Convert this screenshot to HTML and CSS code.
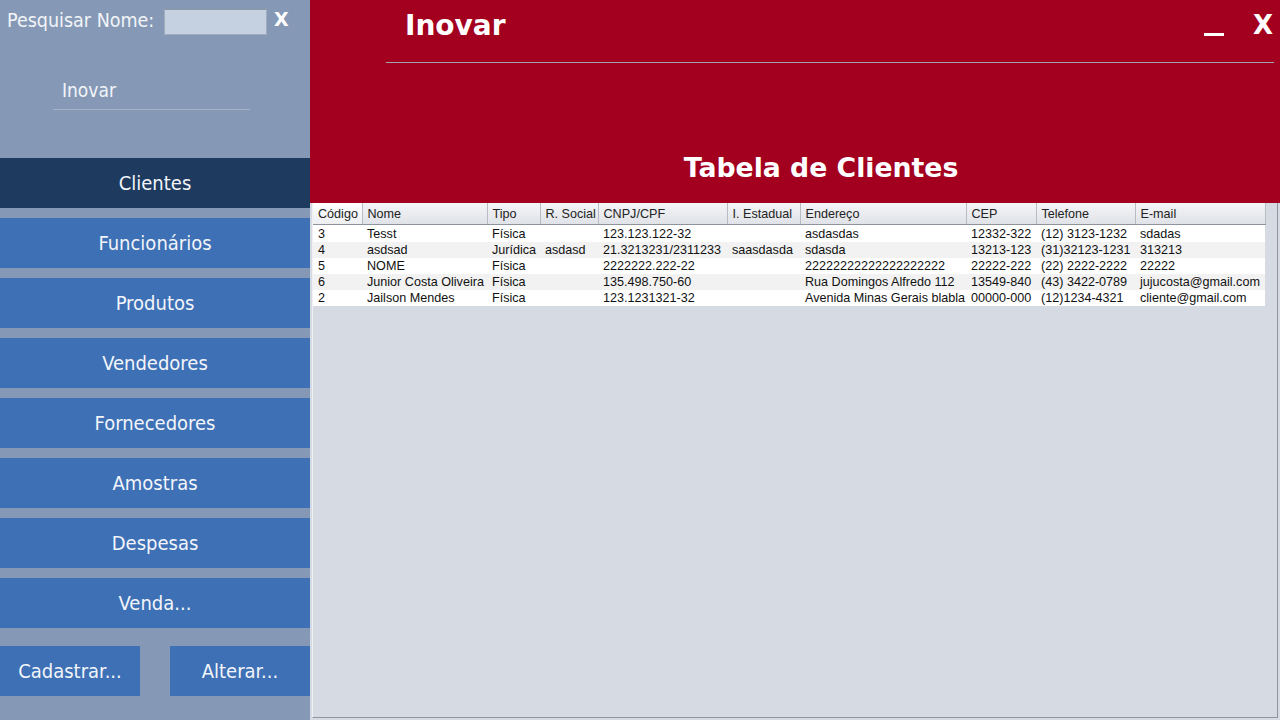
FILE: index.html
```html
<!DOCTYPE html>
<html lang="pt">
<head>
<meta charset="utf-8">
<title>Inovar - Tabela de Clientes</title>
<link rel="stylesheet" href="styles.css">
</head>
<body>
<div class="app">
  <aside class="sidebar">
    <div class="search">
      <label class="search-label" for="q">Pesquisar Nome:</label>
      <input id="q" class="search-input" type="text">
      <span class="search-clear">X</span>
    </div>
    <div class="brand"><span class="brand-text">Inovar</span></div>
    <nav class="menu">
      <div class="menu-item active">Clientes</div>
      <div class="menu-item">Funcionários</div>
      <div class="menu-item">Produtos</div>
      <div class="menu-item">Vendedores</div>
      <div class="menu-item">Fornecedores</div>
      <div class="menu-item">Amostras</div>
      <div class="menu-item">Despesas</div>
      <div class="menu-item">Venda...</div>
    </nav>
    <div class="actions">
      <div class="action">Cadastrar...</div>
      <div class="action">Alterar...</div>
    </div>
  </aside>
  <main class="main">
    <header class="top">
      <div class="titlebar">
        <span class="app-title">Inovar</span>
        <div class="window-ctrls">
          <span class="minimize"></span>
          <span class="close">X</span>
        </div>
      </div>
      <div class="rule"></div>
      <h1 class="page-title">Tabela de Clientes</h1>
    </header>
    <section class="pane">
      <table class="grid">
        <colgroup>
          <col class="c1"><col class="c2"><col class="c3"><col class="c4"><col class="c5">
          <col class="c6"><col class="c7"><col class="c8"><col class="c9"><col class="c10">
        </colgroup>
        <thead>
          <tr>
            <th>Código</th><th>Nome</th><th>Tipo</th><th>R. Social</th><th>CNPJ/CPF</th>
            <th>I. Estadual</th><th>Endereço</th><th>CEP</th><th>Telefone</th><th>E-mail</th>
          </tr>
        </thead>
        <tbody>
          <tr><td>3</td><td>Tesst</td><td>Física</td><td></td><td>123.123.122-32</td><td></td><td>asdasdas</td><td>12332-322</td><td>(12) 3123-1232</td><td>sdadas</td></tr>
          <tr><td>4</td><td>asdsad</td><td>Jurídica</td><td>asdasd</td><td>21.3213231/2311233</td><td>saasdasda</td><td>sdasda</td><td>13213-123</td><td>(31)32123-1231</td><td>313213</td></tr>
          <tr><td>5</td><td>NOME</td><td>Física</td><td></td><td>2222222.222-22</td><td></td><td>22222222222222222222</td><td>22222-222</td><td>(22) 2222-2222</td><td>22222</td></tr>
          <tr><td>6</td><td>Junior Costa Oliveira</td><td>Física</td><td></td><td>135.498.750-60</td><td></td><td>Rua Domingos Alfredo 112</td><td>13549-840</td><td>(43) 3422-0789</td><td>jujucosta@gmail.com</td></tr>
          <tr><td>2</td><td>Jailson Mendes</td><td>Física</td><td></td><td>123.1231321-32</td><td></td><td>Avenida Minas Gerais blabla</td><td>00000-000</td><td>(12)1234-4321</td><td>cliente@gmail.com</td></tr>
        </tbody>
      </table>
    </section>
  </main>
</div>
</body>
</html>
```

FILE: styles.css
```css
* { box-sizing: border-box; }
html, body { margin: 0; padding: 0; }
body {
  width: 1280px;
  height: 720px;
  overflow: hidden;
  font-family: "DejaVu Sans Condensed", "DejaVu Sans", sans-serif;
}
.app {
  display: flex;
  width: 1280px;
  height: 720px;
}

/* Sidebar */
.sidebar {
  width: 310px;
  flex: none;
  background: #8599b6;
  display: flex;
  flex-direction: column;
  color: #f2f4f8;
}
.search {
  display: flex;
  align-items: center;
  height: 44px;
  padding: 0 0 0 7px;
}
.search-label {
  font-size: 19.5px;
  width: 157px;
  white-space: nowrap;
  margin-top: -4px;
}
.search-input {
  width: 103px;
  height: 26px;
  margin: 0;
  padding: 0;
  background: #c5d1e0;
  border: 1px solid #a3acba;
  border-top-color: #8e97a4;
  outline: none;
}
.search-clear {
  margin-left: 7px;
  font-family: "DejaVu Sans", sans-serif;
  font-weight: bold;
  font-size: 19px;
  color: #ffffff;
  margin-top: -6px;
}
.brand {
  height: 114px;
  padding: 35px 0 0 53px;
}
.brand-text {
  display: block;
  width: 197px;
  height: 31px;
  padding-left: 9px;
  font-size: 19px;
  border-bottom: 1px solid #a6b2c6;
}
.menu {
  display: flex;
  flex-direction: column;
  gap: 10px;
}
.menu-item {
  height: 50px;
  background: #3e70b5;
  display: flex;
  align-items: center;
  justify-content: center;
  font-size: 20px;
  color: #f2f5fa;
}
.menu-item.active {
  background: #1f3a5f;
}
.actions {
  display: flex;
  justify-content: space-between;
  margin-top: 18px;
}
.action {
  width: 140px;
  height: 50px;
  background: #3e70b5;
  display: flex;
  align-items: center;
  justify-content: center;
  font-size: 20px;
  color: #f2f5fa;
}

/* Main */
.main {
  flex: 1;
  display: flex;
  flex-direction: column;
  background: #d6dae2;
}
.top {
  height: 203px;
  flex: none;
  background: #a30020;
  color: #ffffff;
}
.titlebar {
  display: flex;
  align-items: center;
  justify-content: space-between;
  height: 50px;
  padding: 0 7px 0 95px;
}
.app-title {
  font-family: "DejaVu Sans", sans-serif;
  font-weight: bold;
  font-size: 28px;
}
.window-ctrls {
  display: flex;
  align-items: center;
}
.minimize {
  display: block;
  width: 20px;
  height: 3px;
  background: #ffffff;
  margin-top: 18px;
  margin-right: 29px;
}
.close {
  font-family: "DejaVu Sans", sans-serif;
  font-weight: bold;
  font-size: 26px;
  line-height: 1;
}
.rule {
  height: 1px;
  margin: 12px 6px 0 76px;
  background: #a3a3b0;
}
.page-title {
  margin: 88px 0 0 0;
  padding-left: 52px;
  text-align: center;
  font-family: "DejaVu Sans", sans-serif;
  font-weight: bold;
  font-size: 26.7px;
  line-height: 34px;
}

/* Table pane */
.pane {
  flex: 1;
  margin: 0 2px 2px 2px;
  border-right: 1px solid #9095a0;
  border-bottom: 1px solid #9095a0;
  border-left: 1px solid #eef0f4;
  background: #d6dae2;
}
.grid {
  table-layout: fixed;
  border-collapse: collapse;
  width: 952px;
  font-family: "Liberation Sans", Arial, sans-serif;
  font-size: 12.6px;
  color: #111;
}
.c1 { width: 49px; }
.c2 { width: 125px; }
.c3 { width: 53px; }
.c4 { width: 58px; }
.c5 { width: 129px; }
.c6 { width: 73px; }
.c7 { width: 166px; }
.c8 { width: 70px; }
.c9 { width: 99px; }
.c10 { width: 130px; }
.grid th {
  height: 21px;
  padding: 1px 0 0 5px;
  text-align: left;
  font-weight: normal;
  color: #222;
  background: linear-gradient(#f4f5f7, #dfe2e7);
  border-right: 1px solid #b7bcc5;
  border-bottom: 1px solid #8f949c;
  white-space: nowrap;
  overflow: hidden;
}
.grid th:first-child {
  background: linear-gradient(#ffffff, #eceef1);
}
.grid td {
  height: 16px;
  padding: 0 0 0 5px;
  line-height: 16px;
  white-space: nowrap;
  overflow: hidden;
  background: #ffffff;
}
.grid tbody tr:first-child td { padding-top: 1px; height: 17px; }
.grid tbody tr:nth-child(even) td {
  background: #f2f2f2;
}
```
